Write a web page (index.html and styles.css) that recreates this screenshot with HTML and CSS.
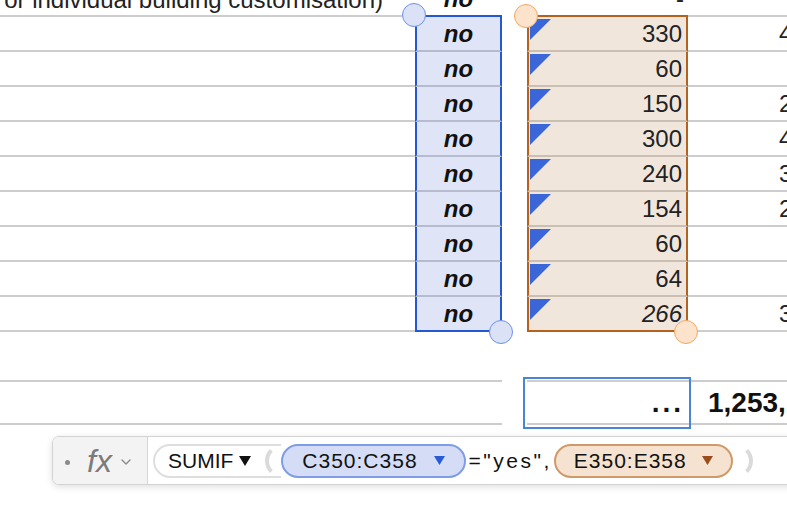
FILE: index.html
```html
<!DOCTYPE html>
<html>
<head>
<meta charset="utf-8">
<title>Sheet</title>
<link rel="stylesheet" href="styles.css">
</head>
<body>
<div class="sheet">
  <div class="row">
    <div class="cell ca label">or individual building customisation)</div>
    <div class="cell cc b-top"><span class="no">no</span></div>
    <div class="cell cd"></div>
    <div class="cell ce o-top"><span class="num">-</span></div>
    <div class="cell cf"></div>
  </div>
  <div class="row">
    <div class="cell ca"></div>
    <div class="cell cc rb"><span class="no">no</span></div>
    <div class="cell cd"></div>
    <div class="cell ce ro"><i class="tri"></i><span class="num">330</span></div>
    <div class="cell cf"><span class="num">4</span></div>
  </div>
  <div class="row">
    <div class="cell ca"></div>
    <div class="cell cc rb"><span class="no">no</span></div>
    <div class="cell cd"></div>
    <div class="cell ce ro"><i class="tri"></i><span class="num">60</span></div>
    <div class="cell cf"></div>
  </div>
  <div class="row">
    <div class="cell ca"></div>
    <div class="cell cc rb"><span class="no">no</span></div>
    <div class="cell cd"></div>
    <div class="cell ce ro"><i class="tri"></i><span class="num">150</span></div>
    <div class="cell cf"><span class="num">2</span></div>
  </div>
  <div class="row">
    <div class="cell ca"></div>
    <div class="cell cc rb"><span class="no">no</span></div>
    <div class="cell cd"></div>
    <div class="cell ce ro"><i class="tri"></i><span class="num">300</span></div>
    <div class="cell cf"><span class="num">4</span></div>
  </div>
  <div class="row">
    <div class="cell ca"></div>
    <div class="cell cc rb"><span class="no">no</span></div>
    <div class="cell cd"></div>
    <div class="cell ce ro"><i class="tri"></i><span class="num">240</span></div>
    <div class="cell cf"><span class="num">3</span></div>
  </div>
  <div class="row">
    <div class="cell ca"></div>
    <div class="cell cc rb"><span class="no">no</span></div>
    <div class="cell cd"></div>
    <div class="cell ce ro"><i class="tri"></i><span class="num">154</span></div>
    <div class="cell cf"><span class="num">2</span></div>
  </div>
  <div class="row">
    <div class="cell ca"></div>
    <div class="cell cc rb"><span class="no">no</span></div>
    <div class="cell cd"></div>
    <div class="cell ce ro"><i class="tri"></i><span class="num">60</span></div>
    <div class="cell cf"></div>
  </div>
  <div class="row">
    <div class="cell ca"></div>
    <div class="cell cc rb"><span class="no">no</span></div>
    <div class="cell cd"></div>
    <div class="cell ce ro"><i class="tri"></i><span class="num">64</span></div>
    <div class="cell cf"></div>
  </div>
  <div class="row">
    <div class="cell ca"></div>
    <div class="cell cc rb b-last"><span class="no">no</span></div>
    <div class="cell cd"></div>
    <div class="cell ce ro o-last"><i class="tri"></i><span class="num it">266</span></div>
    <div class="cell cf"><span class="num">3</span></div>
  </div>
  <div class="spacer"></div>
  <div class="row total">
    <div class="cell ca"></div>
    <div class="cell cc"></div>
    <div class="cell cd"></div>
    <div class="cell ce"><span class="num bold dots">...</span></div>
    <div class="cell cf"><span class="num bold big">1,253,</span></div>
  </div>
</div>

<div class="handle h-blue" style="left:402px;top:3px"></div>
<div class="handle h-blue" style="left:489px;top:320px"></div>
<div class="handle h-orange" style="left:514px;top:4px"></div>
<div class="handle h-orange" style="left:674px;top:320px"></div>
<div class="selection"></div>

<div class="fbar">
  <div class="fx-sec">
    <span class="dot"></span>
    <span class="fx">fx</span>
    <svg class="chev" width="10" height="6" viewBox="0 0 10 6"><path d="M1 1l4 4 4-4" fill="none" stroke="#8a8a8a" stroke-width="1.4" stroke-linecap="round" stroke-linejoin="round"/></svg>
  </div>
  <div class="expr">
    <span class="tok fn">SUMIF<svg class="caret" width="12" height="10" viewBox="0 0 12 10"><path d="M0 0h12L6 10z" fill="#111"/></svg></span>
    <span class="args">
      <span class="tok ref-b">C350:C358<svg class="caret cb" width="11" height="9" viewBox="0 0 11 9"><path d="M0 0h11L5.5 9z" fill="#2b5ad6"/></svg></span>
      <span class="lit">="yes",</span>
      <span class="tok ref-o">E350:E358<svg class="caret co" width="11" height="9" viewBox="0 0 11 9"><path d="M0 0h11L5.5 9z" fill="#9a4c1c"/></svg></span>
    </span>
  </div>
</div>
</body>
</html>
```

FILE: styles.css
```css
* {
  box-sizing: border-box;
  margin: 0;
  padding: 0;
}

html, body {
  width: 787px;
  height: 508px;
  overflow: hidden;
  background: #ffffff;
}

body {
  position: relative;
  font-family: "Liberation Sans", Arial, sans-serif;
  color: #1c1c1c;
}

.sheet {
  margin-top: -18px;
}

.row {
  display: flex;
  height: 35px;
}

.cell {
  flex: none;
  display: flex;
  align-items: center;
  border-bottom: 2px solid #cdcdcd;
  font-size: 24px;
  white-space: nowrap;
}

.ca { width: 415px; }
.cc { width: 87px; justify-content: center; }
.cd { width: 25px; border-bottom: none; }
.ce { width: 161px; justify-content: flex-end; padding-right: 4px; }
.cf { width: 200px; padding-left: 91px; }

.label {
  justify-content: flex-end;
  align-items: flex-end;
  padding-right: 32px;
  padding-bottom: 1px;
  color: #222;
}

.no {
  font-weight: bold;
  font-style: italic;
  color: #111;
}

.num { color: #222; }
.it { font-style: italic; }

/* blue range (column C) */
.b-top { border-bottom-color: #2457d6; }
.rb {
  background: #dfe5f7;
  border-left: 2px solid #2457d6;
  border-right: 2px solid #2457d6;
  border-bottom-color: #b6bccd;
}
.rb.b-last { border-bottom-color: #2457d6; }

/* orange range (column E) */
.o-top { border-bottom-color: #b5621f; }
.ro {
  background: #f1e6dc;
  border-left: 2px solid #b5621f;
  border-right: 2px solid #b5621f;
  border-bottom-color: #cbbeb2;
  justify-content: space-between;
}
.ro.o-last { border-bottom-color: #b5621f; }

.tri {
  align-self: flex-start;
  width: 0;
  height: 0;
  margin-top: 2px;
  margin-left: 1px;
  border-top: 21px solid #3a66d8;
  border-right: 21px solid transparent;
}

.spacer { height: 48px; }

.row.total { height: 45px; }
.total .cell {
  border-top: 2px solid #cdcdcd;
}
.total .cd { border-top: none; }
.bold { font-weight: bold; }
.dots { font-size: 28px; letter-spacing: 3px; color: #111; }
.big { font-size: 28px; color: #111; }
.total .cf { padding-left: 20px; }
.total .ce { padding-right: 4px; }

.handle {
  position: absolute;
  width: 24px;
  height: 24px;
  border-radius: 50%;
}
.h-blue {
  background: #dbe2f5;
  border: 1.5px solid #6d8ff0;
}
.h-orange {
  background: #fde3cb;
  border: 1.5px solid #f2a863;
}

.selection {
  position: absolute;
  left: 523px;
  top: 377px;
  width: 168px;
  height: 52px;
  border: 2px solid #4a84d4;
}

/* formula bar */
.fbar {
  position: absolute;
  left: 52px;
  top: 436px;
  width: 760px;
  height: 49px;
  display: flex;
  background: #ffffff;
  border: 1px solid #d3d3d3;
  border-radius: 7px;
  box-shadow: 0 2px 7px rgba(0, 0, 0, 0.13);
  overflow: hidden;
}

.fx-sec {
  flex: none;
  width: 95px;
  display: flex;
  align-items: center;
  padding-left: 12px;
  background: #f3f3f3;
  border-right: 1px solid #d6d6d6;
}

.dot {
  width: 5px;
  height: 5px;
  border-radius: 50%;
  background: #8a8a8a;
  margin-top: 3px;
}

.fx {
  margin-left: 17px;
  font-size: 32px;
  font-style: italic;
  color: #7b7b7b;
  line-height: 1;
}

.chev {
  margin-left: 9px;
  margin-top: 3px;
}

.expr {
  display: flex;
  align-items: center;
  padding-left: 5px;
  font-size: 21px;
  color: #111;
}

.tok {
  flex: none;
  display: flex;
  align-items: center;
  height: 34px;
  border-radius: 17px;
  white-space: nowrap;
}

.fn {
  border: 2px solid #dedede;
  border-right: none;
  border-radius: 17px 0 0 17px;
  padding: 0 30px 0 13px;
  background: #fff;
}

.fn .caret { margin-left: 6px; }

.args {
  flex: none;
  display: flex;
  align-items: center;
  height: 34px;
  margin-left: -16px;
  padding-left: 12px;
  padding-right: 16px;
  background: transparent;
  border: 4px solid #dadada;
  border-top-color: transparent;
  border-bottom-color: transparent;
  border-radius: 17px;
}

.ref-b {
  background: #d4ddf5;
  border: 2px solid #7e9de6;
  padding: 0 19px;
  letter-spacing: 1px;
}
.ref-b .caret { margin-left: 16px; }

.lit {
  margin-left: 3px;
  letter-spacing: 2.5px;
  white-space: nowrap;
}

.ref-o {
  margin-left: 2px;
  background: #f5e2d0;
  border: 2px solid #cf9a68;
  padding: 0 18px 0 18px;
  letter-spacing: 1px;
}
.ref-o .caret { margin-left: 15px; }
```
